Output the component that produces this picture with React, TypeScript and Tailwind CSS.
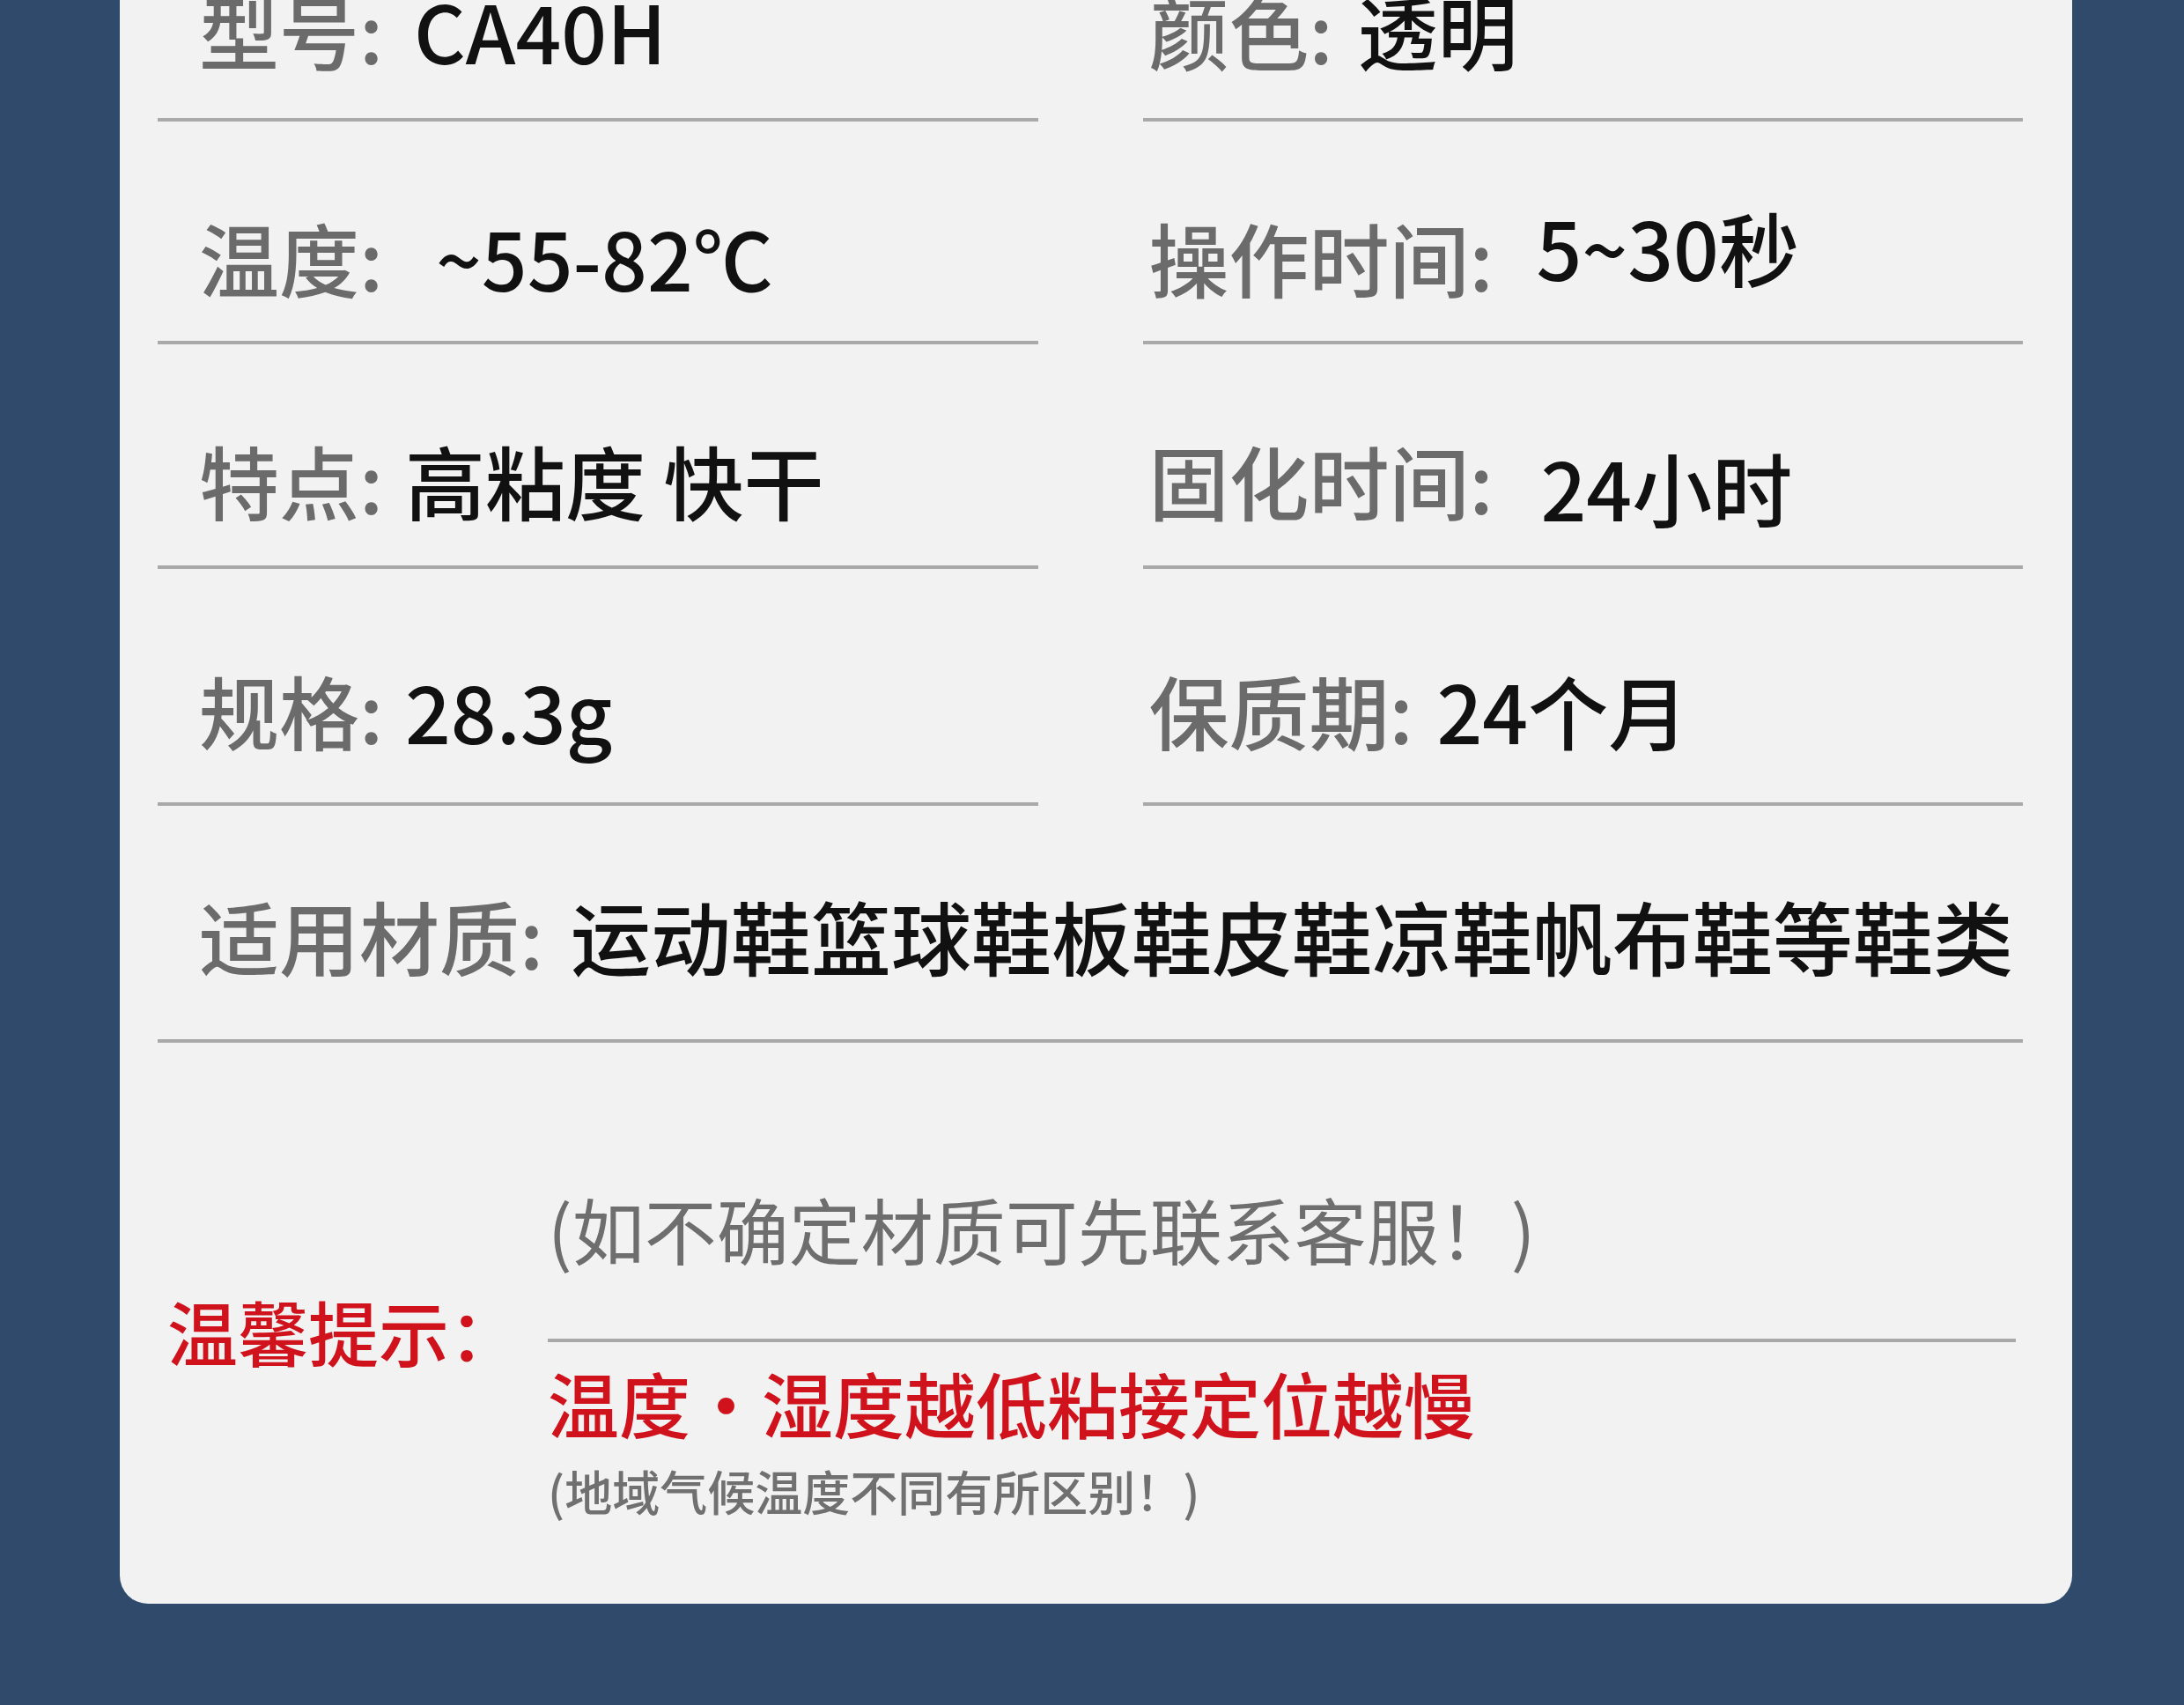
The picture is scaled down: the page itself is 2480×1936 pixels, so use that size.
const FONT = "font-['Noto_Sans_CJK_SC','Noto_Sans',sans-serif]";

type Cell = { label: string; value: string; lw: string; vy?: string };

// label box widths keep the values where the reference puts them
const ROWS: Array<{ h: string; pb: string; left: Cell; right: Cell }> = [
  {
    h: "h-[178px]",
    pb: "pb-[55px]",
    left: { label: "型号:", value: "CA40H", lw: "w-[244px]" },
    right: { label: "颜色:", value: "透明", lw: "w-[237px]" },
  },
  {
    h: "h-[253px]",
    pb: "pb-[50px]",
    left: { label: "温度:", value: "~55-82℃", lw: "w-[269px]" },
    right: { label: "操作时间:", value: "5~30秒", lw: "w-[440px]", vy: "mb-[12px]" },
  },
  {
    h: "h-[255px]",
    pb: "pb-[52px]",
    left: { label: "特点:", value: "高粘度 快干", lw: "w-[234px]" },
    right: { label: "固化时间:", value: "24小时", lw: "w-[445px]", vy: "-mb-[8px]" },
  },
  {
    h: "h-[269px]",
    pb: "pb-[60px]",
    left: { label: "规格:", value: "28.3g", lw: "w-[234px]" },
    right: { label: "保质期:", value: "24个月", lw: "w-[327px]" },
  },
];

function SpecCell({ cell, h, pb, pl }: { cell: Cell; h: string; pb: string; pl: string }) {
  return (
    <div className={`flex items-end border-b-4 border-[#a9a9a9] ${pl} ${h} ${pb}`}>
      <span className={`shrink-0 whitespace-nowrap text-[#6b6b6b] ${cell.lw}`}>{cell.label}</span>
      <span className={`whitespace-nowrap text-[#111111] ${cell.vy ?? ""}`}>{cell.value}</span>
    </div>
  );
}

export default function App() {
  return (
    <div className={`min-h-screen overflow-hidden bg-[#2f4a6b] pl-[136px] pr-[127px] ${FONT}`}>
      <div className="-mt-[40px] rounded-b-[32px] bg-[#f2f2f2]">
        <div className="grid grid-cols-2 gap-x-[119px] pl-[43px] pr-[56px] text-[91px] font-medium leading-none">
          {ROWS.map((r, i) => (
            <div key={i} className="contents">
              <SpecCell cell={r.left} h={r.h} pb={r.pb} pl="pl-[47px]" />
              <SpecCell cell={r.right} h={r.h} pb={r.pb} pl="pl-[7px]" />
            </div>
          ))}
          <div className="col-span-2 flex h-[269px] items-end border-b-4 border-[#a9a9a9] pb-[73px] pl-[47px]">
            <span className="w-[422px] shrink-0 whitespace-nowrap text-[#6b6b6b]">适用材质:</span>
            <span className="whitespace-nowrap text-[#111111]">运动鞋篮球鞋板鞋皮鞋凉鞋帆布鞋等鞋类</span>
          </div>
        </div>

        <div className="flex pb-[101px] pl-[54px] pr-[64px] leading-none">
          <div className="w-[432px] shrink-0 pt-[286px] text-[80px] font-medium text-[#d0121c]">温馨提示：</div>
          <div className="flex-1">
            <p className="mt-[170px] whitespace-nowrap text-[82px] text-[#6e6e6e]">(如不确定材质可先联系客服！)</p>
            <div className="mt-[84px] h-[4px] bg-[#a9a9a9]" />
            <p className="mt-[27px] whitespace-nowrap text-[81px] font-medium text-[#d0121c]">温度・湿度越低粘接定位越慢</p>
            <p className="mt-[34px] whitespace-nowrap text-[54px] font-medium text-[#707070]">(地域气候温度不同有所区别！)</p>
          </div>
        </div>
      </div>
    </div>
  );
}
